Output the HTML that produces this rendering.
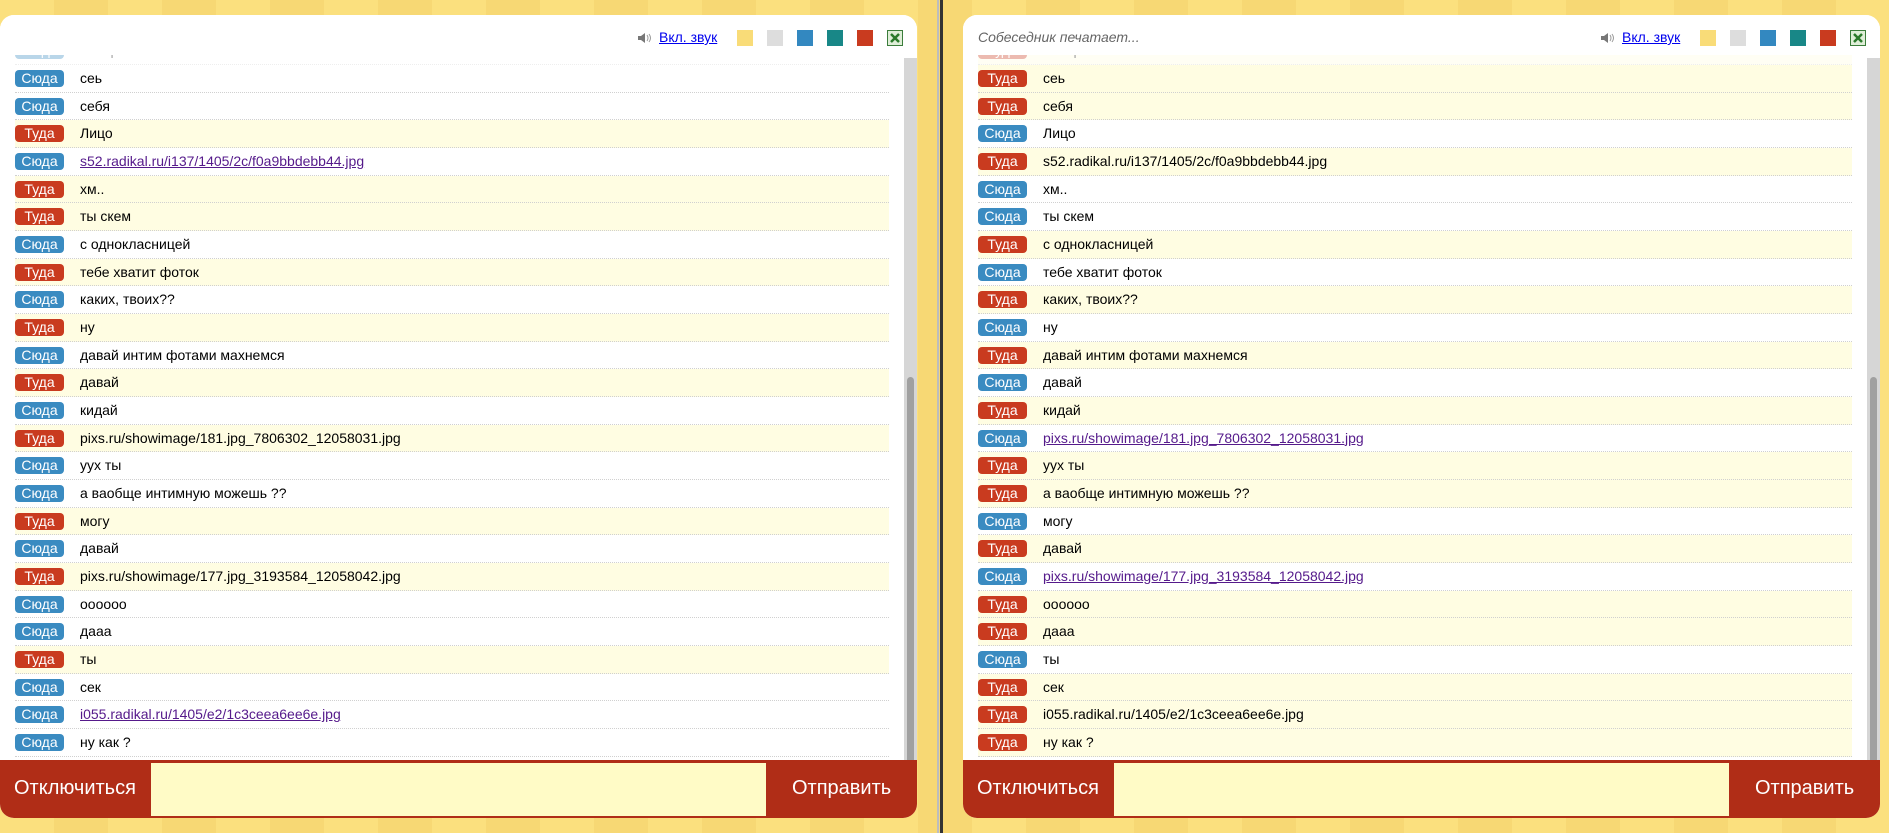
<!DOCTYPE html>
<html><head><meta charset="utf-8"><style>
*{margin:0;padding:0;box-sizing:border-box}
body{width:1889px;height:833px;overflow:hidden;background:#f9dc78;font-family:"Liberation Sans",Arial,sans-serif;position:relative;
background-image:repeating-linear-gradient(90deg,#fbe07e 0 54px,#f7d874 54px 108px);}
.div1{position:absolute;left:937px;top:0;width:2px;height:833px;background:#bdbdbd}
.div2{position:absolute;left:940px;top:0;width:3px;height:833px;background:#333}
.panel{position:absolute;top:15px;width:917px;height:803px;background:#fff;border-radius:14px;overflow:hidden}
.p1{left:0}.p2{left:963px}
.hdr{position:absolute;left:0;top:0;width:917px;height:40px;background:#fff;z-index:2}
.snd{position:absolute;top:17px;left:637px;width:16px;height:12px}
.lnk{position:absolute;top:14px;left:659px;font-size:14px;color:#00e;text-decoration:underline}
.sq{position:absolute;top:15px;width:16px;height:16px}
.xl{position:absolute;top:15px;left:887px;width:16px;height:16px;background:#fff;border:1px solid #3b7d3b}
.typing{position:absolute;top:14px;left:15px;font-size:14px;font-style:italic;color:#666}
.msgs{position:absolute;top:40px;left:0;width:904px;height:705px;overflow:hidden}
.row{position:absolute;left:15px;width:874px;height:27.67px;border-bottom:1px dotted #d0d0d0}
.y{background:#fffde2}
.b{position:absolute;left:0;top:5px;width:49px;height:17px;border-radius:4px;color:#fff;font-size:14px;line-height:17px;text-align:center}
.s{background:#3a8bc1}.t{background:#c93b1f}
.tx{position:absolute;left:65px;top:4px;font-size:14px;color:#000;line-height:18px}
.tx a{color:#551a8b;text-decoration:underline}
.sb{position:absolute;left:904px;top:43px;width:13px;height:702px;background:#d6d6d6}
.th{position:absolute;left:3px;top:319px;width:7px;height:383px;background:#a0a0a0;border-radius:4px 4px 0 0}
.foot{position:absolute;left:0;top:745px;width:917px;height:58px;background:#b02d17}
.bt{position:absolute;top:0;height:58px;line-height:56px;color:#fff;font-size:20px}
.inp{position:absolute;left:151px;top:3px;width:615px;height:53px;background:#fffbc6}
</style></head><body>
<div class="div1"></div><div class="div2"></div>

<div class="panel p1">
<div class="hdr">
<svg class="snd" viewBox="0 0 16 12"><path d="M1 4h3l4-3v10L4 8H1z" fill="#777"/><path d="M10 3q2 3 0 6M12 2q3 4 0 8" stroke="#999" fill="none"/></svg>
<div class="lnk">Вкл. звук</div>
<div class="sq" style="left:737px;background:#f9dc78"></div>
<div class="sq" style="left:767px;background:#dddddd"></div>
<div class="sq" style="left:797px;background:#3388c0"></div>
<div class="sq" style="left:827px;background:#188787"></div>
<div class="sq" style="left:857px;background:#c93b1f"></div>
<div class="xl"><svg width="14" height="14" viewBox="0 0 14 14"><rect width="14" height="14" fill="#dfeed8"/><path d="M3 3l8 8M11 3l-8 8" stroke="#2a7a2a" stroke-width="2.5"/></svg></div>
</div>
<div class="msgs">
<div class="row" style="top:-17.67px;opacity:.35"><span class="b s">Сюда</span><span class="tx">смотри</span></div>
<div class="row" style="top:10px"><span class="b s">Сюда</span><span class="tx">сеь</span></div>
<div class="row" style="top:37.67px"><span class="b s">Сюда</span><span class="tx">себя</span></div>
<div class="row y" style="top:65.33px"><span class="b t">Туда</span><span class="tx">Лицо</span></div>
<div class="row" style="top:93px"><span class="b s">Сюда</span><span class="tx"><a>s52.radikal.ru/i137/1405/2c/f0a9bbdebb44.jpg</a></span></div>
<div class="row y" style="top:120.67px"><span class="b t">Туда</span><span class="tx">хм..</span></div>
<div class="row y" style="top:148.33px"><span class="b t">Туда</span><span class="tx">ты скем</span></div>
<div class="row" style="top:176px"><span class="b s">Сюда</span><span class="tx">с однокласницей</span></div>
<div class="row y" style="top:203.67px"><span class="b t">Туда</span><span class="tx">тебе хватит фоток</span></div>
<div class="row" style="top:231.33px"><span class="b s">Сюда</span><span class="tx">каких, твоих??</span></div>
<div class="row y" style="top:259px"><span class="b t">Туда</span><span class="tx">ну</span></div>
<div class="row" style="top:286.67px"><span class="b s">Сюда</span><span class="tx">давай интим фотами махнемся</span></div>
<div class="row y" style="top:314.33px"><span class="b t">Туда</span><span class="tx">давай</span></div>
<div class="row" style="top:342px"><span class="b s">Сюда</span><span class="tx">кидай</span></div>
<div class="row y" style="top:369.67px"><span class="b t">Туда</span><span class="tx">pixs.ru/showimage/181.jpg_7806302_12058031.jpg</span></div>
<div class="row" style="top:397.33px"><span class="b s">Сюда</span><span class="tx">уух ты</span></div>
<div class="row" style="top:425px"><span class="b s">Сюда</span><span class="tx">а ваобще интимную можешь ??</span></div>
<div class="row y" style="top:452.67px"><span class="b t">Туда</span><span class="tx">могу</span></div>
<div class="row" style="top:480.33px"><span class="b s">Сюда</span><span class="tx">давай</span></div>
<div class="row y" style="top:508px"><span class="b t">Туда</span><span class="tx">pixs.ru/showimage/177.jpg_3193584_12058042.jpg</span></div>
<div class="row" style="top:535.67px"><span class="b s">Сюда</span><span class="tx">оооооо</span></div>
<div class="row" style="top:563.33px"><span class="b s">Сюда</span><span class="tx">дааа</span></div>
<div class="row y" style="top:591px"><span class="b t">Туда</span><span class="tx">ты</span></div>
<div class="row" style="top:618.67px"><span class="b s">Сюда</span><span class="tx">сек</span></div>
<div class="row" style="top:646.33px"><span class="b s">Сюда</span><span class="tx"><a>i055.radikal.ru/1405/e2/1c3ceea6ee6e.jpg</a></span></div>
<div class="row" style="top:674px"><span class="b s">Сюда</span><span class="tx">ну как ?</span></div>
</div>
<div class="sb"><div class="th"></div></div>
<div class="foot"><span class="bt" style="left:14px">Отключиться</span><div class="inp"></div><span class="bt" style="left:792px">Отправить</span></div>
</div>

<div class="panel p2">
<div class="hdr">
<div class="typing">Собеседник печатает...</div>
<svg class="snd" viewBox="0 0 16 12"><path d="M1 4h3l4-3v10L4 8H1z" fill="#777"/><path d="M10 3q2 3 0 6M12 2q3 4 0 8" stroke="#999" fill="none"/></svg>
<div class="lnk">Вкл. звук</div>
<div class="sq" style="left:737px;background:#f9dc78"></div>
<div class="sq" style="left:767px;background:#dddddd"></div>
<div class="sq" style="left:797px;background:#3388c0"></div>
<div class="sq" style="left:827px;background:#188787"></div>
<div class="sq" style="left:857px;background:#c93b1f"></div>
<div class="xl"><svg width="14" height="14" viewBox="0 0 14 14"><rect width="14" height="14" fill="#dfeed8"/><path d="M3 3l8 8M11 3l-8 8" stroke="#2a7a2a" stroke-width="2.5"/></svg></div>
</div>
<div class="msgs">
<div class="row y" style="top:-17.67px;opacity:.35"><span class="b t">Туда</span><span class="tx">смотри</span></div>
<div class="row y" style="top:10px"><span class="b t">Туда</span><span class="tx">сеь</span></div>
<div class="row y" style="top:37.67px"><span class="b t">Туда</span><span class="tx">себя</span></div>
<div class="row" style="top:65.33px"><span class="b s">Сюда</span><span class="tx">Лицо</span></div>
<div class="row y" style="top:93px"><span class="b t">Туда</span><span class="tx">s52.radikal.ru/i137/1405/2c/f0a9bbdebb44.jpg</span></div>
<div class="row" style="top:120.67px"><span class="b s">Сюда</span><span class="tx">хм..</span></div>
<div class="row" style="top:148.33px"><span class="b s">Сюда</span><span class="tx">ты скем</span></div>
<div class="row y" style="top:176px"><span class="b t">Туда</span><span class="tx">с однокласницей</span></div>
<div class="row" style="top:203.67px"><span class="b s">Сюда</span><span class="tx">тебе хватит фоток</span></div>
<div class="row y" style="top:231.33px"><span class="b t">Туда</span><span class="tx">каких, твоих??</span></div>
<div class="row" style="top:259px"><span class="b s">Сюда</span><span class="tx">ну</span></div>
<div class="row y" style="top:286.67px"><span class="b t">Туда</span><span class="tx">давай интим фотами махнемся</span></div>
<div class="row" style="top:314.33px"><span class="b s">Сюда</span><span class="tx">давай</span></div>
<div class="row y" style="top:342px"><span class="b t">Туда</span><span class="tx">кидай</span></div>
<div class="row" style="top:369.67px"><span class="b s">Сюда</span><span class="tx"><a>pixs.ru/showimage/181.jpg_7806302_12058031.jpg</a></span></div>
<div class="row y" style="top:397.33px"><span class="b t">Туда</span><span class="tx">уух ты</span></div>
<div class="row y" style="top:425px"><span class="b t">Туда</span><span class="tx">а ваобще интимную можешь ??</span></div>
<div class="row" style="top:452.67px"><span class="b s">Сюда</span><span class="tx">могу</span></div>
<div class="row y" style="top:480.33px"><span class="b t">Туда</span><span class="tx">давай</span></div>
<div class="row" style="top:508px"><span class="b s">Сюда</span><span class="tx"><a>pixs.ru/showimage/177.jpg_3193584_12058042.jpg</a></span></div>
<div class="row y" style="top:535.67px"><span class="b t">Туда</span><span class="tx">оооооо</span></div>
<div class="row y" style="top:563.33px"><span class="b t">Туда</span><span class="tx">дааа</span></div>
<div class="row" style="top:591px"><span class="b s">Сюда</span><span class="tx">ты</span></div>
<div class="row y" style="top:618.67px"><span class="b t">Туда</span><span class="tx">сек</span></div>
<div class="row y" style="top:646.33px"><span class="b t">Туда</span><span class="tx">i055.radikal.ru/1405/e2/1c3ceea6ee6e.jpg</span></div>
<div class="row y" style="top:674px"><span class="b t">Туда</span><span class="tx">ну как ?</span></div>
</div>
<div class="sb"><div class="th"></div></div>
<div class="foot"><span class="bt" style="left:14px">Отключиться</span><div class="inp"></div><span class="bt" style="left:792px">Отправить</span></div>
</div>
</body></html>
